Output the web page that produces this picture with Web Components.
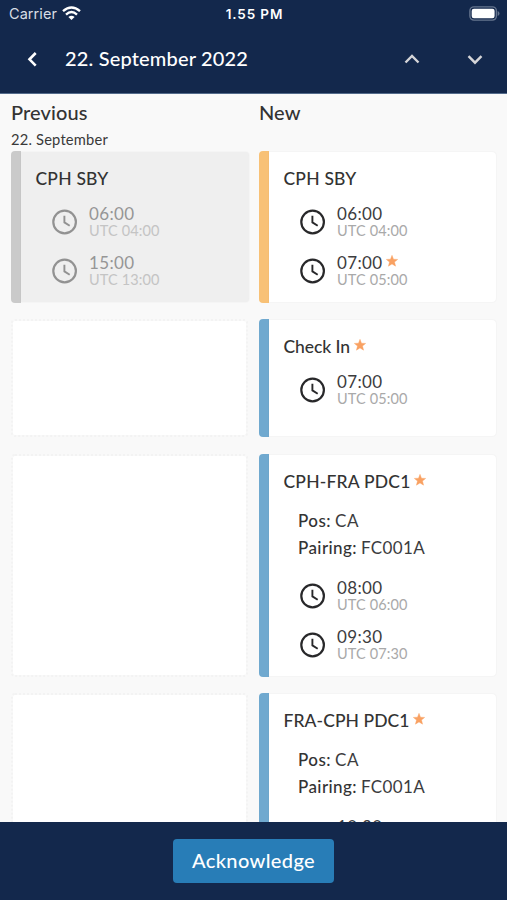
<!DOCTYPE html>
<html lang="en">
<head>
<meta charset="utf-8">
<title>Roster changes</title>
<style>
html,body{margin:0;height:100%;overflow:hidden}
body{font-family:Lato,"Open Sans",sans-serif;color:#333;background:#f9f9f9}
</style>
</head>
<body>
<roster-app></roster-app>
<script>
const define = (name, html, setup) => {
  const t = document.createElement('template');
  t.innerHTML = html;
  customElements.define(name, class extends HTMLElement {
    connectedCallback() {
      if (this.shadowRoot) return;
      this.attachShadow({mode: 'open'}).append(t.content.cloneNode(true));
      if (setup) setup(this, this.shadowRoot);
    }
  });
};

/* One line of text, tracked so that its advance equals the "w" attribute. */
define('fit-text', `<style>
:host{display:block;white-space:nowrap}
span{display:inline-block}
</style><span><slot></slot></span>`, (host, root) => {
  const s = root.querySelector('span');
  const n = host.textContent.length;
  s.style.letterSpacing = ((+host.getAttribute('w') - s.getBoundingClientRect().width) / n) + 'px';
});

define('star-icon', `<style>:host{display:block;width:12px;height:12px}svg{display:block}</style>
<svg width="12" height="12" viewBox="0 0 12 12"><path fill="#f9a162" stroke="#f9a162" stroke-width=".4" stroke-linejoin="round" d="M6 .3 7.5 4.2 11.7 4.4 8.5 7.1 9.6 11.2 6 8.9 2.4 11.2 3.5 7.1 .3 4.4 4.5 4.2Z"/></svg>`);

define('clock-icon', `<style>:host{display:block;width:26px;height:26px}svg{display:block}</style>
<svg width="26" height="26" viewBox="0 0 26 26" fill="none" stroke="currentColor"><circle cx="12.6" cy="13" r="11.3" stroke-width="2.2"/><path stroke-width="1.9" d="M12.4 6.8v6.6l5.3 3.4"/></svg>`);

/* A local time, with its UTC time below it when data-u is given. */
const timeRow = (t, u, star) => `<time-entry data-t="${t}"${u ? ` data-u="${u}"` : ''}${star ? ' data-star' : ''}></time-entry>`;
customElements.define('time-entry', class extends HTMLElement {
  connectedCallback() {
    if (this.shadowRoot) return;
    const {t, u, star} = this.dataset;
    this.attachShadow({mode: 'open'}).innerHTML = `<style>
:host{display:flex;height:35px;margin-left:16px;gap:11.5px}
clock-icon{margin-top:5px;color:var(--clock,#28282a)}
.t{display:flex;gap:3.5px;height:19px;font-size:17px;line-height:20px;color:var(--time,#3c3c3e)}
.u{font-size:14.5px;line-height:16px;color:var(--utc,#a9a9a9)}
star-icon{margin-top:2px}
</style><clock-icon></clock-icon><div><div class="t"><fit-text w="45.5">${t}</fit-text>${star === undefined ? '' : '<star-icon></star-icon>'}</div>${u ? `<fit-text class="u" w="70.5">UTC ${u}</fit-text>` : ''}</div>`;
  }
});

define('duty-card', `<style>
:host{display:flex;box-sizing:border-box;min-height:0}
.bar{width:10px;border-radius:4px 0 0 4px;background:var(--bar,#70a9cf)}
.body{flex:1;margin:1px var(--edge,1px) 1px 0;background:var(--card,#fff);border-radius:0 4px 4px 0;box-shadow:0 0 2px rgba(0,0,0,.07);padding:17px 0 0 14.5px}
.title{display:flex;gap:3.5px;height:20px;font-size:17.5px;line-height:20px;font-weight:500;color:#333}
.times{display:grid;gap:14px;margin-top:15px}
:host([info]) .times{margin-top:20.5px}
::slotted(star-icon){margin-top:2px}
</style><div class="bar"></div><div class="body"><div class="title"><slot name="title"></slot></div><slot name="info"></slot><div class="times"><slot></slot></div></div>`);

define('pos-info', `<style>
:host{display:grid;gap:7px;margin:18.5px 0 0 14.5px;font-size:17px;line-height:20px;color:#3c3c3e}
div{display:flex;gap:4px}.k{font-weight:500;color:#333}
</style><div><fit-text class="k" w="33">Pos:</fit-text><fit-text w="24">CA</fit-text></div>
<div><fit-text class="k" w="59">Pairing:</fit-text><fit-text w="64">FC001A</fit-text></div>`);

define('empty-slot', `<style>:host{display:block;box-sizing:border-box;border:2px dotted #f3f3f3;border-radius:4px;background:#fff;background-clip:padding-box;margin:0 1px 0 0}</style>`);

define('top-bar', `<style>
:host{display:block;height:94px;box-sizing:border-box;background:#13284c;color:#fff;border-bottom:1px solid #536b8b}
.status{display:grid;grid-template-columns:1fr auto 1fr;align-items:center;height:28px;padding:0 7px 0 9px;font:14.5px/20px Inter,sans-serif}
.status>div{display:flex;align-items:center;gap:5px}
.carrier{color:#d8dde5}.carrier svg{margin-top:-2px}
.time{font-weight:600;font-size:13.5px}
.batt{justify-content:flex-end}.batt svg{margin-top:-2px}
.nav{display:flex;align-items:center;height:62px}
.back{margin-left:26px}.date{margin:-2px 0 0 25px;font-size:20px;line-height:24px;font-weight:500;flex:1}
.up{margin-right:47.5px}.down{margin-right:24px}
svg{display:block}
</style>
<div class="status"><div class="carrier"><fit-text w="48">Carrier</fit-text>
<svg width="19" height="15" viewBox="0 0 19 15" fill="none" stroke="#fff" stroke-width="2.4"><path d="M1 5.2Q9.5-2.2 18 5.2M4 8.6Q9.5 3.6 15 8.6"/><path d="M9.5 14 6.4 10.9Q9.5 8.4 12.6 10.9Z" fill="#fff" stroke="none"/></svg></div>
<div class="time"><fit-text w="57.5">1.55 PM</fit-text></div>
<div class="batt"><svg width="31" height="15" viewBox="0 0 31 15"><rect x=".9" y=".9" width="26.5" height="13.2" rx="4" fill="none" stroke="#66758e" stroke-width="1.4"/><rect x="2.7" y="2.7" width="22.9" height="9.6" rx="2.2" fill="#fff"/><path d="M28.7 5q1.8 .8 1.8 2.5t-1.8 2.5z" fill="#66758e"/></svg></div></div>
<div class="nav"><svg class="back" width="14" height="18" viewBox="0 0 14 18" fill="none" stroke="#fff" stroke-width="2.6"><path d="M9.7 3 3.5 9.3 9.7 15.6"/></svg>
<fit-text class="date" w="183">22. September 2022</fit-text>
<svg class="up" width="16" height="12" viewBox="0 0 16 12" fill="none" stroke="#d5d5d8" stroke-width="2.4"><path d="M1.5 9.5 8 3 14.5 9.5"/></svg>
<svg class="down" width="16" height="12" viewBox="0 0 16 12" fill="none" stroke="#d5d5d8" stroke-width="2.4"><path d="M1.5 3.2 8 9.7 14.5 3.2"/></svg></div>`);

define('action-bar', `<style>
:host{display:flex;justify-content:center;height:78px;box-sizing:border-box;padding-top:17px;background:#13284c}
button{all:unset;box-sizing:border-box;width:161px;height:44px;border-radius:4px;background:#287db7;color:#fff;font-size:20px;line-height:42px;font-weight:500;display:flex;justify-content:center}
</style><button><fit-text w="123">Acknowledge</fit-text></button>`);

define('roster-app', `<style>
:host{display:grid;grid-template-rows:94px 728px 78px;width:507px;height:900px}
main{overflow:hidden;display:grid;grid-template-columns:238px 238px;grid-template-rows:57px 152px 16px 118px 17px 223px 16px 223px;column-gap:10px;padding-left:11px;align-content:start}
.gap{grid-column:1/3}
.h{font-size:20px;line-height:24px;font-weight:500;padding-top:5.5px}
.d{font-size:14.7px;line-height:18px;padding-top:6px;color:#3a3a3a}
.old{--bar:#cacaca;--card:#efefef;--clock:#929292;--time:#969696;--utc:#c4c4c4;--edge:0px}
.sby{--bar:#f8c176}
</style>
<top-bar></top-bar>
<main>
<div><fit-text class="h" w="76.5">Previous</fit-text><fit-text class="d" w="97">22. September</fit-text></div>
<div><fit-text class="h" w="41.5">New</fit-text></div>
<duty-card class="old"><fit-text slot="title" w="73">CPH SBY</fit-text>${timeRow('06:00','04:00')}${timeRow('15:00','13:00')}</duty-card>
<duty-card class="sby"><fit-text slot="title" w="73">CPH SBY</fit-text>${timeRow('06:00','04:00')}${timeRow('07:00','05:00',1)}</duty-card>
<div class="gap"></div>
<empty-slot></empty-slot>
<duty-card><fit-text slot="title" w="66.5">Check In</fit-text><star-icon slot="title"></star-icon>${timeRow('07:00','05:00')}</duty-card>
<div class="gap"></div>
<empty-slot></empty-slot>
<duty-card info><fit-text slot="title" w="127">CPH-FRA PDC1</fit-text><star-icon slot="title"></star-icon><pos-info slot="info"></pos-info>${timeRow('08:00','06:00')}${timeRow('09:30','07:30')}</duty-card>
<div class="gap"></div>
<empty-slot></empty-slot>
<duty-card info><fit-text slot="title" w="126">FRA-CPH PDC1</fit-text><star-icon slot="title"></star-icon><pos-info slot="info"></pos-info>${timeRow('10:30')}</duty-card>
</main>
<action-bar></action-bar>`);
</script>
</body>
</html>
